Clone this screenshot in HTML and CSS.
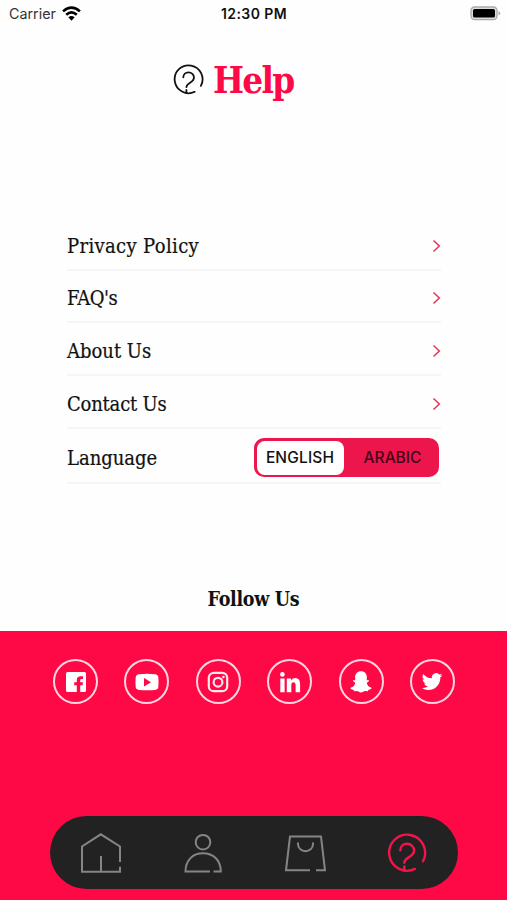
FILE: index.html
```html
<!DOCTYPE html>
<html lang="en">
<head>
<meta charset="utf-8">
<title>Help</title>
<link rel="stylesheet" href="styles.css">
</head>
<body>
<svg class="defs" aria-hidden="true">
  <symbol id="help" viewBox="0 0 40 40">
    <path d="M28 35.9 A18 18 0 1 1 36 28.2"/>
    <path d="M13.3 17.2 C13.4 13.4 16.3 10.8 20 10.8 C24 10.8 27.1 13.8 27.1 17.5 C27.1 24.5 17.7 23.6 17.3 29.8 M17.3 33.4 V37.5"/>
  </symbol>
  <symbol id="chevron" viewBox="0 0 8 14"><path d="M1 1.5 6.8 7 1 12.5"/></symbol>
</svg>
<header class="status">
  <div class="carrier"><span>Carrier</span>
    <svg class="wifi" viewBox="0 0 18 14"><path d="M1 5 Q9-2.2 17 5 M4 8.2 Q9 3.8 14 8.2"/><path class="solid" d="M6 10.6 Q9 8 12 10.6 L9 13.8Z"/></svg>
  </div>
  <time>12:30 PM</time>
  <svg class="battery" viewBox="0 0 31 15"><rect class="case" x="1" y="1" width="26" height="12.6" rx="3.5"/><rect x="3" y="3" width="22" height="8.6" rx="1.6"/><path class="cap" d="M28.5 5 Q32 7.3 28.5 9.6Z"/></svg>
</header>
<main>
  <div class="title"><svg class="help-icon"><use href="#help"/></svg><h1>Help</h1></div>
  <ul class="menu">
    <li><span class="privacy">Privacy Policy</span><svg class="chevron"><use href="#chevron"/></svg></li>
    <li><span class="faq">FAQ's</span><svg class="chevron"><use href="#chevron"/></svg></li>
    <li><span class="about">About Us</span><svg class="chevron"><use href="#chevron"/></svg></li>
    <li><span class="contact">Contact Us</span><svg class="chevron"><use href="#chevron"/></svg></li>
    <li class="language"><span>Language</span>
      <div class="switch"><button class="active">ENGLISH</button><button>ARABIC</button></div>
    </li>
  </ul>
  <h2>Follow Us</h2>
</main>
<footer>
  <div class="social">
    <a><svg viewBox="0 0 44 44"><path d="M13.5 12H30.5Q32 12 32 13.5V30.5Q32 32 30.5 32H26.2V25.2H28.6L29 22.2H26.2V20.4Q26.2 19.1 27.6 19.1H29V16.3H26.8Q22.8 16.3 22.8 20V22.2H20.2V25.2H22.8V32H13.5Q12 32 12 30.5V13.5Q12 12 13.5 12Z"/></svg></a>
    <a><svg viewBox="0 0 44 44"><path fill-rule="evenodd" d="M14 14.2Q22 13.3 30 14.2Q33 14.5 33.3 17.3Q33.8 22 33.3 27Q33 29.6 30 29.9Q22 30.8 14 29.9Q11 29.6 10.7 27Q10.2 22 10.7 17.3Q11 14.5 14 14.2ZM19 18V26.4L26 22.2Z"/></svg></a>
    <a><svg class="outline" viewBox="0 0 44 44"><rect x="12.8" y="12.8" width="18.4" height="18.4" rx="5"/><circle cx="22" cy="22.2" r="4.4"/><circle class="dot" cx="27.4" cy="17" r="1.2"/></svg></a>
    <a><svg viewBox="0 0 44 44"><circle cx="14.4" cy="14.4" r="2.3"/><path d="M12.3 18.4H16.6V32.3H12.3ZM18.8 18.4H23.1V20.4Q24.5 18.1 27.1 18.1Q32.1 18.1 32.1 24.2V32.3H27.6V25.3Q27.6 22.2 25.5 22.2Q23.3 22.2 23.3 25.3V32.3H18.8Z"/></svg></a>
    <a><svg viewBox="0 0 44 44"><path d="M22 11.3C25.8 11.3 27.9 14 27.9 17.3L27.7 20.2Q28 20.5 29.2 20Q30.6 20.4 29.6 21.5Q28.8 22.1 27.9 22.8C28 25.5 30 27 32.2 27.6Q33.1 28.3 32 29Q30.8 29.7 29.4 29.9L28.8 31.3L26.3 31.1C24.5 31.2 23.8 32.6 22 32.6S19.5 31.2 17.7 31.1L15.2 31.3L14.6 29.9Q13.2 29.7 12 29Q10.9 28.3 11.8 27.6C14 27 16 25.5 16.1 22.8Q15.2 22.1 14.4 21.5Q13.4 20.4 14.8 20Q16 20.5 16.3 20.2L16.1 17.3C16.1 14 18.2 11.3 22 11.3Z"/></svg></a>
    <a><svg viewBox="0 0 44 44"><path transform="translate(11.8 11.2) scale(.86)" d="M23.95 4.57a10 10 0 0 1-2.82.77 4.96 4.96 0 0 0 2.16-2.72 9.9 9.9 0 0 1-3.12 1.19 4.92 4.92 0 0 0-8.38 4.48A13.9 13.9 0 0 1 1.64 3.16a4.92 4.92 0 0 0 1.52 6.57 4.9 4.9 0 0 1-2.23-.61v.06a4.92 4.92 0 0 0 3.95 4.83 5 5 0 0 1-2.21.08 4.94 4.94 0 0 0 4.6 3.42A9.87 9.87 0 0 1 0 19.54a13.94 13.94 0 0 0 7.55 2.21c9.05 0 14-7.5 14-13.98l-.02-.64a9.9 9.9 0 0 0 2.42-2.56Z"/></svg></a>
  </div>
  <nav>
    <a><svg viewBox="0 0 42 42"><path d="M40 30V14.5L20.8 2.3 2 14.5V39.7H40V34.7M21 24V39.7"/></svg></a>
    <a><svg viewBox="0 0 42 42"><circle cx="21" cy="10.2" r="7.3"/><path d="M28 39.5H3.5C3.5 28 11 21.3 21 21.3S38.8 28 38.8 39.5H31.5"/></svg></a>
    <a><svg viewBox="0 0 42 42"><path d="M26 38.3H2L6 4.5H37L41 38.3H32M14 10.5V12C14 21.5 29 21.5 29 12V10.5"/></svg></a>
    <a class="current"><svg viewBox="0 0 40 40"><use href="#help"/></svg></a>
  </nav>
</footer>
</body>
</html>
```
FILE: styles.css
```css
* { box-sizing: border-box; }
body {
  margin: 0;
  width: 507px;
  height: 900px;
  display: flex;
  flex-direction: column;
  overflow: hidden;
  background: #fefefe;
  color: #111;
  font-family: "Roboto Slab", "DejaVu Serif Condensed", "DejaVu Serif", serif;
  font-stretch: condensed;
}
.defs { position: absolute; width: 0; height: 0; }
svg { display: block; }
.status {
  height: 28px;
  padding: 0 6px 0 9px;
  display: grid;
  grid-template-columns: 1fr auto 1fr;
  align-items: center;
  font: 14.3px/28px Inter, sans-serif;
}
.carrier { display: flex; align-items: center; gap: 6px; color: #333; }
.status time { font-weight: 600; font-size: 14px; letter-spacing: .4px; margin-right: 2px; }
.wifi { width: 19px; height: 15px; fill: none; stroke: #000; stroke-width: 2.5; margin-top: -2px; }
.wifi .solid { fill: #000; stroke: none; }
.battery { width: 31px; height: 15px; justify-self: end; margin-top: -1px; }
.battery .case { fill: #ddd; stroke: #aaa; stroke-width: 1.3; }
.battery .cap { fill: #aaa; }
main { height: 603px; }
.title {
  height: 60px;
  margin: 22px 0 0 173px;
  display: flex;
  align-items: center;
  gap: 9px;
}
.help-icon { width: 31px; height: 31px; fill: none; stroke: #111; stroke-width: 2.3; stroke-linecap: round; margin-top: -1px; }
h1 { margin: 0; padding-top: 1px; font-size: 36.5px; line-height: 60px; letter-spacing: -1.7px; color: #ff0846; }
.menu { list-style: none; margin: 108px 66px 0 67px; padding: 0; }
.menu li {
  height: 52.7px;
  padding-top: 4.5px;
  display: flex;
  align-items: center;
  justify-content: space-between;
  border-bottom: 2px solid #f5f5f5;
  font-size: 20px;
  -webkit-text-stroke: .2px #111;
}
.menu .language { height: 55px; padding: 5px 2px 0 0; }
.menu .privacy { letter-spacing: .35px; }
.menu .faq { letter-spacing: -.5px; }
.menu .contact { letter-spacing: -.2px; }
.chevron { width: 9px; height: 14px; fill: none; stroke: #e63c5a; stroke-width: 1.6; }
.switch {
  width: 185px;
  height: 39px;
  padding: 2.5px;
  display: flex;
  border-radius: 10px;
  background: #ec154c;
  -webkit-text-stroke: 0;
}
.switch button {
  flex: 1;
  padding: 0 0 0 5px;
  border: 0;
  border-radius: 8px;
  background: none;
  color: #42051b;
  font: 500 15.5px Inter, sans-serif;
}
.switch .active { flex: 0 0 87px; padding: 0; letter-spacing: .15px; background: #fff; color: #111; }
h2 { margin: 101px 0 0; text-align: center; font-size: 19.5px; line-height: 30px; letter-spacing: -.3px; color: #111; }
footer {
  flex: 1;
  display: flex;
  flex-direction: column;
  justify-content: space-between;
  padding: 28px 49px 11px 50px;
  background: #ff0846;
}
.social { display: flex; justify-content: space-between; padding: 0 3px; }
.social a {
  width: 45px;
  height: 45px;
  border: 2px solid #ffd5df;
  border-radius: 50%;
  display: grid;
  place-items: center;
}
.social svg { width: 44px; height: 44px; margin: -1.5px; fill: #fff; }
.social .outline { fill: none; stroke: #ffe8ee; stroke-width: 2.2; }
.social .outline .dot { fill: #fff; stroke: none; }
nav {
  height: 73px;
  padding: 1px 0 0;
  display: grid;
  grid-template-columns: repeat(4, 1fr);
  place-items: center;
  border-radius: 37px;
  background: #222;
}
nav svg { width: 42px; height: 42px; fill: none; stroke: #858585; stroke-width: 2; }
nav .current svg { width: 40px; height: 40px; stroke: #f5134d; stroke-width: 2.4; stroke-linecap: round; }
```
